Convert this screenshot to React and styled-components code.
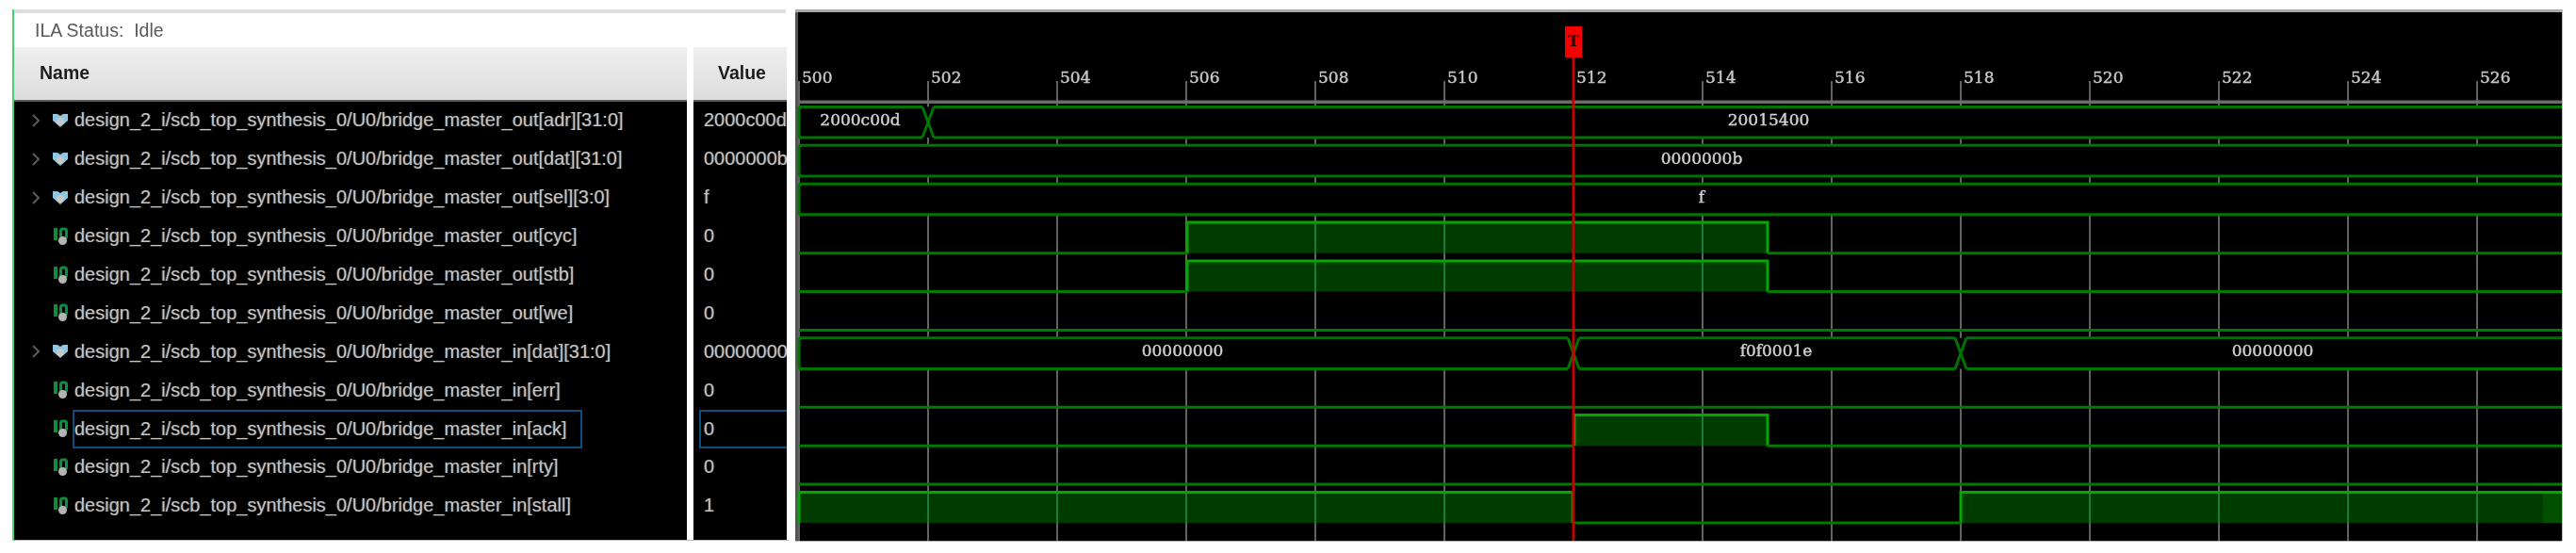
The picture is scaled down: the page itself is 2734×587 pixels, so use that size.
import React from 'react';
import styled, { createGlobalStyle } from 'styled-components';

const signals = [
	{ name: 'design_2_i/scb_top_synthesis_0/U0/bridge_master_out[adr][31:0]', value: '2000c00d', bus: true, cuts: [983], labels: [['2000c00d', 911], ['20015400', 1875]] },
	{ name: 'design_2_i/scb_top_synthesis_0/U0/bridge_master_out[dat][31:0]', value: '0000000b', bus: true, cuts: [], labels: [['0000000b', 1804]] },
	{ name: 'design_2_i/scb_top_synthesis_0/U0/bridge_master_out[sel][3:0]', value: 'f', bus: true, cuts: [], labels: [['f', 1804]] },
	{ name: 'design_2_i/scb_top_synthesis_0/U0/bridge_master_out[cyc]', value: '0', highs: [[1258, 1874]] },
	{ name: 'design_2_i/scb_top_synthesis_0/U0/bridge_master_out[stb]', value: '0', highs: [[1258, 1874]] },
	{ name: 'design_2_i/scb_top_synthesis_0/U0/bridge_master_out[we]', value: '0', highs: [] },
	{ name: 'design_2_i/scb_top_synthesis_0/U0/bridge_master_in[dat][31:0]', value: '00000000', bus: true, cuts: [1668, 2079], labels: [['00000000', 1253], ['f0f0001e', 1883], ['00000000', 2410]] },
	{ name: 'design_2_i/scb_top_synthesis_0/U0/bridge_master_in[err]', value: '0', highs: [] },
	{ name: 'design_2_i/scb_top_synthesis_0/U0/bridge_master_in[ack]', value: '0', highs: [[1669, 1874]], selected: true },
	{ name: 'design_2_i/scb_top_synthesis_0/U0/bridge_master_in[rty]', value: '0', highs: [] },
	{ name: 'design_2_i/scb_top_synthesis_0/U0/bridge_master_in[stall]', value: '1', highs: [[846, 1667], [2079, 2717]] },
];

const ticks = Array.from({ length: 14 }, (_, i) => ({ x: 846 + 137 * i, label: 500 + 2 * i }));
const LEFT = 846;
const RIGHT = 2717;
const rowLow = (i) => 146 + 40.9 * i;
const rowHigh = (i) => rowLow(i) - 32.6;

const BusIcon = () => (
	<svg width="18" height="16" viewBox="0 0 18 16">
		<path d="M1 1 L6 1 L9 3 L12 1 L17 1 L17 8 L9 15 L1 8 Z" fill="#8cc8e4" />
		<circle cx="9" cy="9" r="4" fill="#c8c8c8" />
	</svg>
);

const BitIcon = () => (
	<svg width="18" height="20" viewBox="0 0 18 20">
		<path d="M4 1 L4 14" stroke="#0b8f3c" strokeWidth="4" fill="none" />
		<rect x="9.5" y="2" width="6" height="10" rx="2" stroke="#0b8f3c" strokeWidth="3" fill="none" />
		<circle cx="11.5" cy="14.5" r="4.5" fill="#b4b4b4" />
	</svg>
);

const Chevron = () => (
	<svg width="10" height="14" viewBox="0 0 10 14">
		<path d="M2 1 L8 7 L2 13" stroke="#5c5c5c" strokeWidth="2" fill="none" />
	</svg>
);

const Wave = () => (
	<svg width={RIGHT - 842} height="561" viewBox="842 13 1875 561" style={{ display: 'block' }}>
		{ticks.map((t) => (
			<React.Fragment key={t.x}>
				<GridLine x1={t.x} x2={t.x} y1="86" y2="574" />
				<TickLabel x={t.x + 3} y="88">{t.label}</TickLabel>
			</React.Fragment>
		))}
		<rect x={LEFT} y="106.5" width={RIGHT - LEFT} height="3.5" fill="#6c6c6c" />

		{signals.map((s, i) => {
			const low = rowLow(i);
			const high = rowHigh(i);
			if (s.bus) {
				const marks = s.cuts;
				const starts = [LEFT, ...marks.map((c) => c + 6)];
				const ends = [...marks.map((c) => c - 6), RIGHT];
				return (
					<g key={s.name}>
						<rect x={LEFT} y={high} width={RIGHT - LEFT} height={low - high} fill="#000" />
						<BusLine d={`M${LEFT + 3} ${high} Q${LEFT} ${high} ${LEFT} ${high + 3} L${LEFT} ${low - 3} Q${LEFT} ${low} ${LEFT + 3} ${low}`} />
						{starts.map((a, k) => (
							<BusLine key={a} d={`M${a} ${high} L${ends[k]} ${high} M${a} ${low} L${ends[k]} ${low}`} />
						))}
						{marks.map((c) => (
							<BusLine key={c} d={`M${c - 6} ${high} L${c + 6} ${low} M${c - 6} ${low} L${c + 6} ${high}`} />
						))}
						{s.labels.map(([text, x]) => (
							<BusLabel key={x} x={x} y={low - 13}>{text}</BusLabel>
						))}
					</g>
				);
			}
			let from = LEFT;
			const lows = [];
			s.highs.forEach(([a, b]) => {
				if (a > from) lows.push([from, a]);
				from = b;
			});
			if (from < RIGHT) lows.push([from, RIGHT]);
			return (
				<g key={s.name}>
					{s.highs.map(([a, b]) => (
						<React.Fragment key={a}>
							<rect x={a} y={high} width={b - a} height={low - high} fill="#003c00" />
							{ticks.filter((t) => t.x > a && t.x < b).map((t) => (
								<FillGrid key={t.x} x1={t.x} x2={t.x} y1={high} y2={low} />
							))}
							{b === RIGHT && <rect x="2697" y={high} width="20" height={low - high} fill="#005000" />}
							<HighLine d={`M${a} ${low} L${a} ${high} L${b} ${high}${b < RIGHT ? ` L${b} ${low}` : ''}`} />
						</React.Fragment>
					))}
					{lows.map(([a, b]) => (
						<LowLine key={a} d={`M${a} ${low} L${b} ${low}`} />
					))}
				</g>
			);
		})}

		<rect x="1666.5" y="60" width="2.5" height="514" fill="#c80000" />
		<rect x="1659" y="28" width="18" height="33" fill="#f40000" />
		<MarkerLetter x="1668" y="49">T</MarkerLetter>
	</svg>
);

const App = () => {
	return (
		<Page>
			<GlobalStyle />
			<ListPanel>
				<StatusBar>ILA Status:&nbsp; Idle</StatusBar>
				<Columns>
					<NameColumn>
						<HeadCell indent="27px">Name</HeadCell>
						<Rows>
							{signals.map((s) => (
								<NameRow key={s.name}>
									<ChevronSlot>{s.bus && <Chevron />}</ChevronSlot>
									<IconSlot>{s.bus ? <BusIcon /> : <BitIcon />}</IconSlot>
									<NameLabel $selected={s.selected}>{s.name}</NameLabel>
								</NameRow>
							))}
						</Rows>
					</NameColumn>
					<ValueColumn>
						<HeadCell indent="26px">Value</HeadCell>
						<Rows>
							{signals.map((s) => (
								<ValueCell key={s.name} $selected={s.selected}>{s.value}</ValueCell>
							))}
						</Rows>
					</ValueColumn>
				</Columns>
			</ListPanel>
			<WavePanel>
				<Wave />
			</WavePanel>
		</Page>
	);
};

export default App;

const GlobalStyle = createGlobalStyle`
	html, body {
		margin: 0;
		padding: 0;
		background: #fff;
		overflow: hidden;
	}
`;

const Page = styled.div`
	display: flex;
	gap: 7px;
	width: 2734px;
	height: 587px;
	box-sizing: border-box;
	padding: 10px 0 13px 13px;
	background: #fff;
	font-family: "Liberation Sans", Arial, sans-serif;
	filter: blur(0.7px);
`;

const ListPanel = styled.div`
	display: flex;
	flex-direction: column;
	width: 822px;
	border-left: 2px solid #3fd474;
	border-bottom: 1px solid #bbb;
`;

const StatusBar = styled.div`
	display: flex;
	align-items: center;
	height: 36px;
	margin-right: 3px;
	padding-left: 22px;
	border-top: 4px solid #dcdcdc;
	color: #5a5a5a;
	font-size: 19.5px;
	background: #fff;
`;

const Columns = styled.div`
	display: flex;
	flex: 1;
	min-height: 0;
	gap: 7px;
`;

const NameColumn = styled.div`
	display: flex;
	flex-direction: column;
	width: 714px;
`;

const ValueColumn = styled.div`
	display: flex;
	flex-direction: column;
	width: 99px;
	overflow: hidden;
`;

const HeadCell = styled.div`
	display: flex;
	align-items: center;
	box-sizing: border-box;
	height: 57.5px;
	padding-left: ${(p) => p.indent};
	border-bottom: 2px solid #5a5a5a;
	background: linear-gradient(#f0f0f0, #dcdcdc);
	color: #1c1c1c;
	font-size: 19.5px;
	font-weight: 700;
`;

const Rows = styled.div`
	flex: 1;
	background: #000;
`;

const NameRow = styled.div`
	display: flex;
	align-items: center;
	height: 40.9px;
	padding-left: 18px;
`;

const ChevronSlot = styled.div`
	display: flex;
	width: 22px;
`;

const IconSlot = styled.div`
	display: flex;
	width: 22px;
`;

const NameLabel = styled.div`
	display: flex;
	align-items: center;
	align-self: stretch;
	box-sizing: border-box;
	padding: 0 14px 0 0;
	border: 2px solid ${(p) => (p.$selected ? '#0c4f7c' : 'transparent')};
	color: #c4c4c4;
	font-size: 20px;
	white-space: nowrap;
	text-shadow: -1px 0 0 rgba(60, 130, 190, 0.4), 1px 0 0 rgba(180, 110, 50, 0.4);
`;

const ValueCell = styled.div`
	display: flex;
	align-items: center;
	box-sizing: border-box;
	height: 40.9px;
	margin-left: 6px;
	padding-left: 3px;
	border: 2px solid ${(p) => (p.$selected ? '#0c4f7c' : 'transparent')};
	border-right: 0;
	color: #c4c4c4;
	font-size: 20px;
	white-space: nowrap;
	text-shadow: -1px 0 0 rgba(60, 130, 190, 0.4), 1px 0 0 rgba(180, 110, 50, 0.4);
`;

const WavePanel = styled.div`
	width: 1875px;
	height: 564px;
	box-sizing: border-box;
	border-top: 3px solid #aaa;
	background: #000;
	box-shadow: inset 3px 0 0 #555, 1px 0 0 #bbb, 0 1px 0 #bbb;
`;

const GridLine = styled.line`
	stroke: #626262;
	stroke-width: 2;
`;

const FillGrid = styled.line`
	stroke: #1a7a3c;
	stroke-width: 2;
`;

const BusLine = styled.path`
	stroke: #007400;
	stroke-width: 3;
	fill: none;
`;

const LowLine = styled.path`
	stroke: #007a00;
	stroke-width: 3;
	fill: none;
`;

const HighLine = styled.path`
	stroke: #00a800;
	stroke-width: 3;
	fill: none;
`;

const TickLabel = styled.text`
	fill: #c8c8c8;
	stroke: #c8c8c8;
	stroke-width: 0.4;
	font-family: "DejaVu Serif", serif;
	font-size: 17px;
`;

const BusLabel = styled.text`
	fill: #d0d0d0;
	stroke: #d0d0d0;
	stroke-width: 0.4;
	font-family: "DejaVu Serif", serif;
	font-size: 17px;
	text-anchor: middle;
`;

const MarkerLetter = styled.text`
	fill: #200000;
	font-family: "DejaVu Serif", serif;
	font-size: 16px;
	font-weight: 700;
	text-anchor: middle;
`;
